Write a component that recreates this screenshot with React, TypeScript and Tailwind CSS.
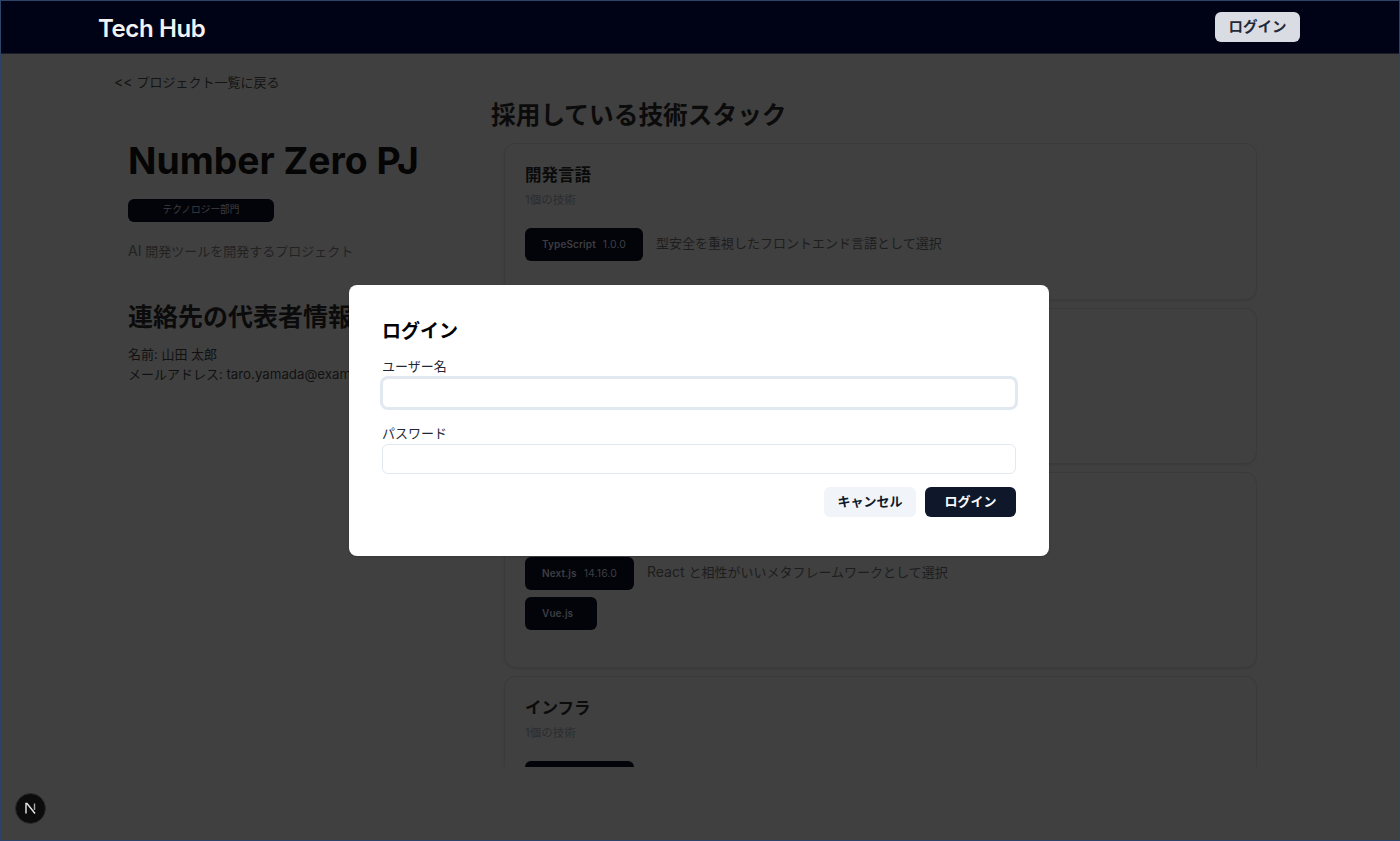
const sans = "font-['Inter','Noto_Sans_CJK_JP',sans-serif]";

type Tech = { name: string; version?: string; reason?: string; prefix?: string };
type Category = { title: string; items: Tech[] };

const categories: Category[] = [
  {
    title: "開発言語",
    items: [{ name: "TypeScript", version: "1.0.0", reason: "型安全を重視したフロントエンド言語として選択" }],
  },
  {
    title: "データベース",
    items: [{ name: "PostgreSQL", version: "16.0", reason: "信頼性の高いデータベースとして選択" }],
  },
  {
    title: "フレームワーク",
    items: [
      { name: "Next.js", version: "14.16.0", prefix: "React ", reason: "と相性がいいメタフレームワークとして選択" },
      { name: "Vue.js" },
    ],
  },
  {
    title: "インフラ",
    items: [{ name: "Docker", version: "14.16.0" }],
  },
];

function TechCard({ category }: { category: Category }) {
  return (
    <div className="rounded-xl border border-[#3a3a3a] px-5 pt-[19px] pb-[37.5px] shadow-[0_1px_2px_rgba(0,0,0,0.1)]">
      <h3 className="text-[16.5px] leading-[24px] font-semibold text-[#0b0b0b]">{category.title}</h3>
      <p className="mt-[3px] text-[11.5px] leading-[20px] text-[#2b2c2e]">{category.items.length}個の技術</p>
      <div className="mt-[18px] flex flex-col gap-[6.5px]">
        {category.items.map((tech) => (
          <div key={tech.name} className="flex items-center gap-[13px]">
            <div className="flex h-[33px] items-center gap-[7px] rounded-md bg-[#03040a] px-[17px] text-[10px] tracking-[0.1px] text-[#3d3e42]">
              <span className="font-semibold">{tech.name}</span>
              <span className="text-[10.5px]">{tech.version}</span>
            </div>
            {tech.reason && (
              <p className="mb-[2px] text-[13px] text-[#1d1d1d]">
                {tech.prefix && <span className="text-sm">{tech.prefix}</span>}
                {tech.reason}
              </p>
            )}
          </div>
        ))}
      </div>
    </div>
  );
}

function LoginModal() {
  return (
    <div className="absolute inset-0 z-10 flex items-center justify-center">
      <div className="mt-[-1px] mr-[2px] h-[271px] w-[700px] rounded-lg bg-white px-[33px] pt-[33px] shadow-sm">
        <h2 className="text-[19px] leading-[28px] font-semibold text-black">ログイン</h2>
        <label className="mt-[10px] mb-[2px] block text-[13px] leading-[20px] text-[#1f2937]">ユーザー名</label>
        <input
          className="block h-[30px] w-full rounded-md border border-[#e2e8f0] bg-white shadow-[0_0_0_2px_#e2e8f0]"
          type="text"
        />
        <label className="mt-[15px] mb-[1px] block text-[13px] leading-[20px] text-[#1f2937]">パスワード</label>
        <input className="block h-[30px] w-full rounded-md border border-[#e2e8f0] bg-white" type="password" />
        <div className="mt-[13px] flex justify-end gap-[9px]">
          <button className="h-[30px] w-[92px] rounded-md bg-[#f1f5f9] text-[13px] font-semibold text-[#0f172a]">
            キャンセル
          </button>
          <button className="h-[30px] w-[91px] rounded-md bg-[#0f172a] text-[13px] font-semibold text-[#f8fafc]">
            ログイン
          </button>
        </div>
      </div>
    </div>
  );
}

export default function App() {
  return (
    <div className={`${sans} relative flex h-screen flex-col overflow-hidden border border-[#2d4468] bg-[#404040]`}>
      <header className="flex h-[53px] shrink-0 items-center justify-between border-b border-[#1b1d28] bg-[#000316] pr-[99px] pl-[97px]">
        <span className="mt-[4px] text-2xl font-semibold tracking-[-0.4px] text-[#f1f2f4]">Tech Hub</span>
        <button className="h-[30px] w-[85px] rounded-md bg-[#d9dce3] text-[14.5px] font-semibold text-[#1f2937]">
          ログイン
        </button>
      </header>

      <main className="flex min-h-0 flex-1 pr-[142px] pb-[73px] pl-[113px]">
        <section className="w-[377px] shrink-0 pt-[18px]">
          <a className="block text-[13px] leading-[18px] text-[#141414]">
            <span className="text-sm">&lt;&lt; </span>プロジェクト一覧に戻る
          </a>
          <div className="pt-[49px] pl-[14px]">
            <h1 className="text-[37.3px] leading-[40px] font-bold text-[#050505]">Number Zero PJ</h1>
            <div className="mt-[18px] flex h-[23px] w-[146px] items-center justify-center rounded-md bg-[#03040a] text-[9.7px] text-[#3d3e42]">
              テクノロジー部門
            </div>
            <p className="mt-[19px] text-[13px] leading-[20px] text-[#222222]">
              <span className="text-sm">AI </span>開発ツールを開発するプロジェクト
            </p>
            <h2 className="mt-[40px] text-[25px] leading-[32px] font-semibold whitespace-nowrap text-[#0b0b0b]">
              連絡先の代表者情報
            </h2>
            <p className="mt-[11px] text-[13px] leading-[20px] text-[#111111]">名前: 山田 太郎</p>
            <p className="text-[13px] leading-[20px] whitespace-nowrap text-[#111111]">
              メールアドレス: <span className="text-[13.3px]">taro.yamada@example.com</span>
            </p>
          </div>
        </section>

        <section className="flex min-w-0 flex-1 flex-col pt-[46px]">
          <h2 className="text-[24.7px] leading-[30px] font-semibold text-[#0b0b0b]">採用している技術スタック</h2>
          <div className="mt-[13px] flex min-h-0 flex-1 flex-col gap-2 overflow-hidden pl-[13px]">
            {categories.map((c) => (
              <div key={c.title} className="shrink-0">
                <TechCard category={c} />
              </div>
            ))}
          </div>
        </section>
      </main>

      {/* Next.js の開発インジケータ */}
      <div className="absolute bottom-[16px] left-[14px] z-20 flex h-[31px] w-[31px] items-center justify-center rounded-full border border-[#2a2a2a] bg-[#0c0c0c]">
        <svg width="13" height="13" viewBox="0 0 13 13" fill="none">
          <path d="M2 11.5V1.5H3L11 11.5" stroke="#e8e8e8" strokeWidth="1.4" />
          <path d="M10.5 1.5V8" stroke="#a8a8a8" strokeWidth="1.4" />
        </svg>
      </div>

      <LoginModal />
    </div>
  );
}
